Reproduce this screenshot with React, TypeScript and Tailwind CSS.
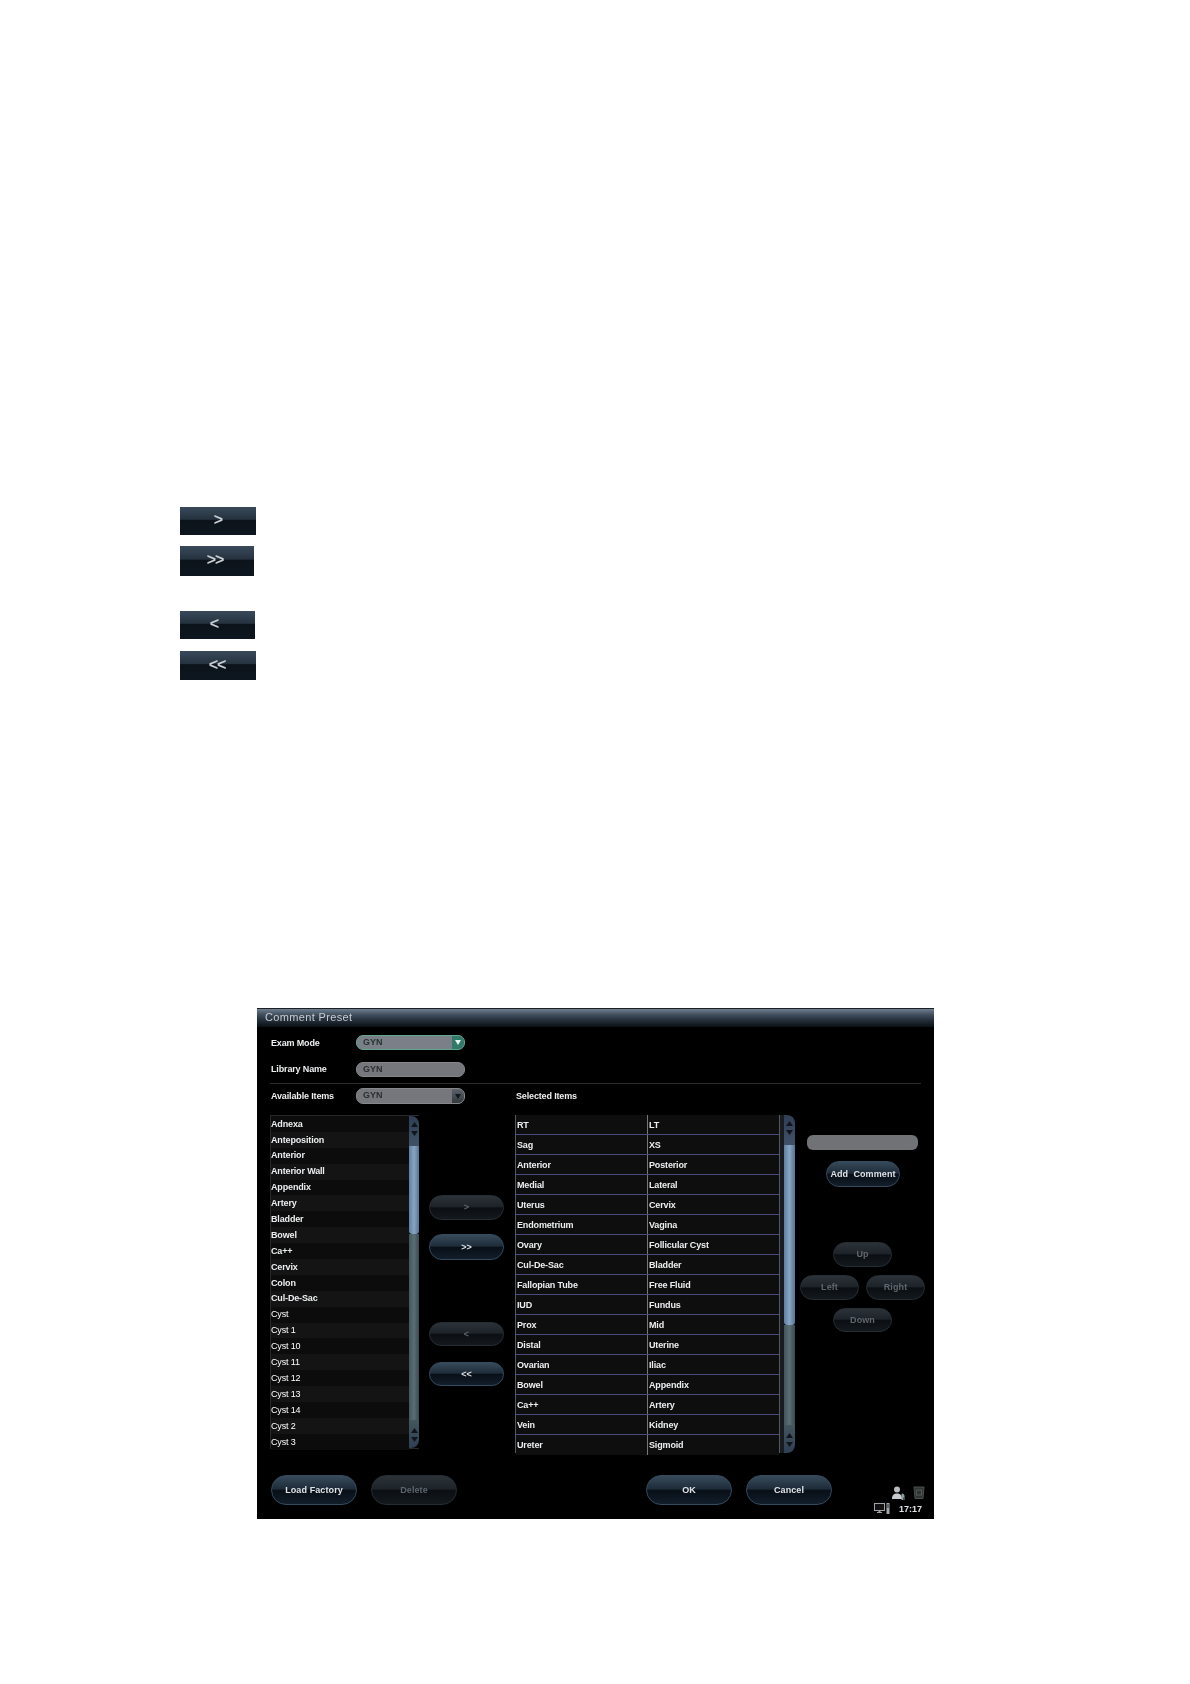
import React from 'react';

const availableItems = [
  'Adnexa', 'Anteposition', 'Anterior', 'Anterior Wall', 'Appendix', 'Artery', 'Bladder', 'Bowel', 'Ca++', 'Cervix',
  'Colon', 'Cul-De-Sac', 'Cyst', 'Cyst 1', 'Cyst 10', 'Cyst 11', 'Cyst 12', 'Cyst 13', 'Cyst 14', 'Cyst 2', 'Cyst 3',
];

const selectedItems = [
  ['RT', 'LT'], ['Sag', 'XS'], ['Anterior', 'Posterior'], ['Medial', 'Lateral'], ['Uterus', 'Cervix'],
  ['Endometrium', 'Vagina'], ['Ovary', 'Follicular Cyst'], ['Cul-De-Sac', 'Bladder'], ['Fallopian Tube', 'Free Fluid'],
  ['IUD', 'Fundus'], ['Prox', 'Mid'], ['Distal', 'Uterine'], ['Ovarian', 'Iliac'], ['Bowel', 'Appendix'],
  ['Ca++', 'Artery'], ['Vein', 'Kidney'], ['Ureter', 'Sigmoid'],
];

function ManualButton({ label, className }: { label: string; className: string }) {
  return (
    <div className={`ml-[180px] flex items-center justify-center bg-[linear-gradient(#3a4a5b_0%,#25323f_44%,#0c131a_47%,#0d1620_100%)] text-[16px] font-bold text-[#c9ced3] blur-[0.3px] ${className}`}>
      <span className="-mt-[2px] tracking-[-1px]">{label}</span>
    </div>
  );
}

function PillButton({ label, disabled, className }: { label: string; disabled?: boolean; className: string }) {
  const look = disabled
    ? 'border-[#252c33] bg-[linear-gradient(#2b3238_0%,#1d2329_46%,#0b0f13_52%,#14191e_100%)] text-[#5f676e]'
    : 'border-[#344a5e] bg-[linear-gradient(#374a5a_0%,#1e2c39_46%,#080f17_52%,#121e2a_100%)] text-[#dfe3e7]';
  return (
    <div className={`flex items-center justify-center rounded-full border text-[9px] font-bold tracking-[0.1px] ${look} ${className}`}>
      <span className="mt-px">{label}</span>
    </div>
  );
}

function SelectBox({ teal, input }: { teal?: boolean; input?: boolean }) {
  return (
    <div className={`flex h-full w-[109px] items-center justify-between overflow-hidden rounded-[7px] pl-[6px] text-[9px] font-bold tracking-[0px] ${teal ? 'border border-[#5fa78f] bg-[#7b8088] text-[#24332f]' : 'border border-[#85878b] bg-[#75777c] text-[#2b2d30]'}`}>
      <span>GYN</span>
      {!input && (
        <div className={`flex h-full w-[12px] items-center justify-center ${teal ? 'bg-[#2f7a68]' : 'bg-[linear-gradient(#5a6168,#33393f)]'}`}>
          <svg width="6" height="5" viewBox="0 0 6 5"><path d="M0 0h6L3 5z" fill={teal ? '#e8f2ee' : '#15191c'} /></svg>
        </div>
      )}
    </div>
  );
}

function Arrow({ up }: { up?: boolean }) {
  return (
    <svg width="7" height="5" viewBox="0 0 7 5" className="mx-auto">
      <path d={up ? 'M0 5L3.5 0L7 5z' : 'M0 0h7L3.5 5z'} fill="#10161c" />
    </svg>
  );
}

function Scrollbar({ thumb, width }: { thumb: string; width: string }) {
  return (
    <div className={`flex h-full flex-col overflow-hidden rounded-r-[8px] ${width}`}>
      <div className="flex h-[30px] shrink-0 flex-col gap-[4px] bg-[linear-gradient(#2f3f55,#3f5168)] pt-[6px]">
        <Arrow up />
        <Arrow />
      </div>
      <div className={`shrink-0 rounded-b-[3px] bg-[linear-gradient(90deg,#5f80a2,#88a5c2_50%,#557595)] ${thumb}`} />
      <div className="flex-1 bg-[linear-gradient(90deg,#43565c,#5a6e74_50%,#3a4a50)]" />
      <div className="flex h-[28px] shrink-0 flex-col justify-end gap-[4px] bg-[linear-gradient(#43565c,#2f3f55)] pb-[6px]">
        <Arrow up />
        <Arrow />
      </div>
    </div>
  );
}

function StatusIcons() {
  return (
    <div className="mt-[11px] ml-[41px] flex w-[52px] flex-col">
      <div className="flex items-start justify-end gap-[7px]">
        <svg width="14" height="14" viewBox="0 0 14 14">
          <circle cx="5" cy="3.500" r="3" fill="#b9bcbf" />
          <path d="M0 13c0-4 2-5.500 5-5.500S10 9 10 13z" fill="#c9cccf" />
          <path d="M10 7.500c1.500 0 2.500 1 2.500 2.500V14h-1v-2.500h-.5V14H9.500v-4c0-1 0-2 .5-2.500z" fill="#8f9fa0" />
        </svg>
        <svg width="12" height="13" viewBox="0 0 12 13">
          <path d="M1 1h10l-1 11.500H2z" fill="#2f3432" stroke="#4a504d" />
          <rect x="3.500" y="4" width="5" height="5" fill="none" stroke="#535a56" />
        </svg>
      </div>
      <div className="mt-[3px] ml-[1px] flex items-center gap-[9px]">
        <svg width="16" height="11" viewBox="0 0 16 11">
          <rect x="0.500" y="0.500" width="10" height="7" fill="#111" stroke="#9da3a8" />
          <path d="M3 10h5V9H6.500V8h-2v1H3z" fill="#9da3a8" />
          <rect x="12.500" y="0" width="3" height="11" fill="#a3a8ac" />
          <path d="M13 2h2M13 4h2" stroke="#222" />
        </svg>
        <span className="text-[9px] font-bold leading-[10px] tracking-[0px] text-[#dfe2e4]">17:17</span>
      </div>
    </div>
  );
}

function CommentPreset() {
  return (
    <div className="ml-[257px] flex h-[511px] w-[677px] flex-col bg-black text-[9px] font-bold tracking-[-0.15px] text-[#eceef0] blur-[0.25px]">
      <div className="flex h-[19px] shrink-0 items-center border-t border-[#1c2024] bg-[linear-gradient(#6f7f90_0%,#42505f_30%,#26313c_60%,#0a0f14_100%)] pb-[2px] pl-[8px] text-[11px] font-normal tracking-[0.35px] text-[#c6ccd2]">
        Comment Preset
      </div>

      <div className="mt-[8px] flex h-[15px] items-center pl-[14px]">
        <span className="mt-[2px] w-[85px]">Exam Mode</span>
        <SelectBox teal />
      </div>
      <div className="mt-[12px] flex h-[15px] items-center pl-[14px]">
        <span className="mt-px w-[85px]">Library Name</span>
        <SelectBox input />
      </div>
      <div className="mt-[6px] ml-[13px] h-px w-[651px] bg-[#2c2c2c]" />
      <div className="mt-[4px] flex h-[16px] items-center pl-[14px]">
        <span className="mt-[2px] w-[85px]">Available Items</span>
        <SelectBox />
        <span className="mt-[2px] ml-[51px]">Selected Items</span>
      </div>

      <div className="mt-[11px] flex h-[338px] items-start pl-[13px]">
        <div className="flex h-[334px] w-[149px] border-y border-l border-[#26292c]">
          <div className="flex-1">
            {availableItems.map((item, i) => (
              <div
                key={item}
                className={`flex h-[15.900px] items-center pt-px ${i % 2 ? 'bg-[#141414]' : 'bg-[#0c0c0c]'} ${i > 11 ? 'font-normal text-white' : ''}`}
              >
                {item}
              </div>
            ))}
          </div>
          <Scrollbar width="w-[10px]" thumb="h-[88px]" />
        </div>

        <div className="ml-[10px] flex w-[75px] flex-col pt-[80px]">
          <PillButton disabled label=">" className="h-[25px]" />
          <PillButton label=">>" className="mt-[14px] h-[26px]" />
          <PillButton disabled label="<" className="mt-[62px] h-[24px]" />
          <PillButton label="<<" className="mt-[16px] h-[24px]" />
        </div>

        <div className="ml-[11px] flex h-[338px] w-[280px] border-l border-[#55585c]">
          <div className="w-[264px] border-r border-[#55585c]">
            {selectedItems.map(([a, b], i) => (
              <div key={a + i} className={`flex h-[20px] items-center bg-[#0e0e0e] ${i === 16 ? '' : 'border-b border-[#4b4a7c]'}`}>
                <span className="w-[132px] self-stretch border-r border-[#77787c] pt-px pl-[1px] leading-[19px]">{a}</span>
                <span className="pt-px pl-[1px] leading-[19px]">{b}</span>
              </div>
            ))}
          </div>
          <div className="w-[4px] bg-[#181c20]" />
          <Scrollbar width="w-[11px]" thumb="h-[180px]" />
        </div>

        <div className="ml-[5px] flex w-[125px] flex-col">
          <div className="mt-[20px] ml-[7px] h-[15px] w-[111px] rounded-[6px] bg-[#707276]" />
          <PillButton label="Add  Comment" className="mt-[11px] ml-[26px] h-[26px] w-[74px] whitespace-pre" />
          <PillButton disabled label="Up" className="mt-[55px] ml-[33px] h-[25px] w-[59px]" />
          <div className="mt-[8px] flex gap-[7px]">
            <PillButton disabled label="Left" className="h-[25px] w-[59px]" />
            <PillButton disabled label="Right" className="h-[25px] w-[59px]" />
          </div>
          <PillButton disabled label="Down" className="mt-[8px] ml-[33px] h-[24px] w-[59px]" />
        </div>
      </div>

      <div className="mt-[22px] flex items-start pl-[14px]">
        <PillButton label="Load Factory" className="h-[30px] w-[86px]" />
        <PillButton disabled label="Delete" className="ml-[14px] h-[30px] w-[86px]" />
        <PillButton label="OK" className="ml-[189px] h-[30px] w-[86px]" />
        <PillButton label="Cancel" className="ml-[14px] h-[30px] w-[86px]" />
        <StatusIcons />
      </div>
    </div>
  );
}

export default function App() {
  return (
    <div className="h-[1684px] overflow-hidden bg-white pt-[507px] font-['Liberation_Sans',Arial,sans-serif]">
      <ManualButton label=">" className="h-[28px] w-[76px]" />
      <ManualButton label=">>" className="mt-[11px] h-[30px] w-[74px] pr-[4px]" />
      <ManualButton label="<" className="mt-[35px] h-[28px] w-[75px] pr-[7px]" />
      <ManualButton label="<<" className="mt-[12px] h-[29px] w-[76px] pr-[2px]" />
      <div className="mt-[328px]">
        <CommentPreset />
      </div>
    </div>
  );
}
